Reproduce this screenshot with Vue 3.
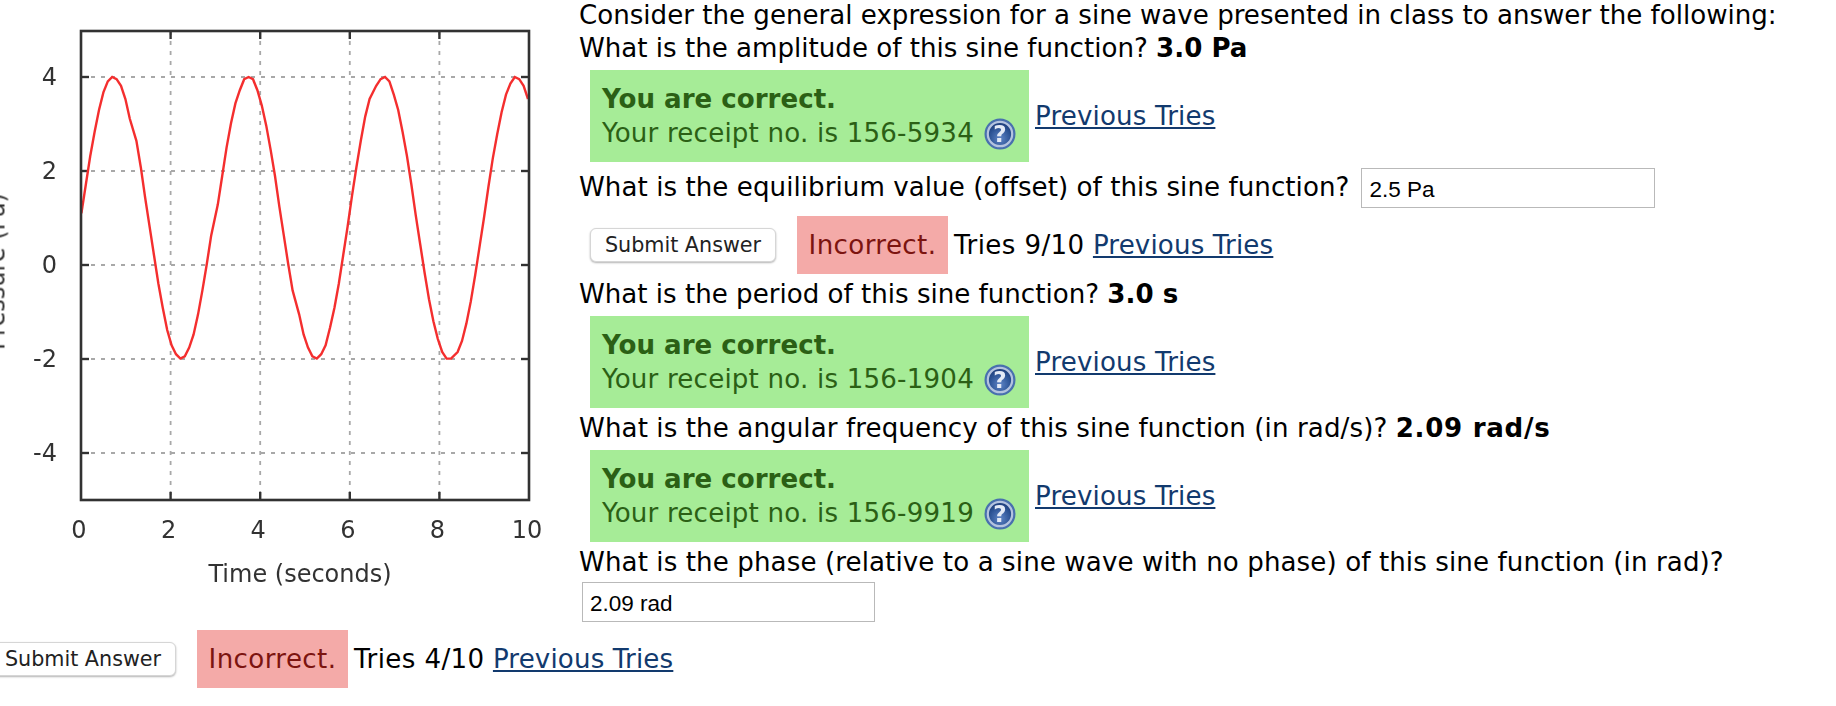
<script setup>
import { computed } from 'vue'

const xTicks = [0, 2, 4, 6, 8, 10]
const yTicks = [4, 2, 0, -2, -4]

const sx = (t) => 81 + t * 44.8
const sy = (v) => 265 - v * 47

// gnuplot default of 100 samples, snapped to the coarse pixels of the png
const curve = computed(() => {
  const pts = []
  for (let i = 0; i < 100; i++) {
    const t = (i / 99) * 10
    const v = 3 * Math.sin(2.0944 * t + 0.03) + 1
    const x = Math.round(sx(t) / 2.2) * 2.2
    const y = Math.round(sy(v) / 2.2) * 2.2
    pts.push(`${x.toFixed(1)},${y.toFixed(1)}`)
  }
  return pts.join(' ')
})
</script>

<template>
  <div class="page">
    <div class="top">
      <svg class="plot" width="579" height="630" viewBox="0 0 579 630">
        <defs>
          <filter id="soft" x="-5%" y="-5%" width="110%" height="110%">
            <feGaussianBlur stdDeviation="0.55" />
          </filter>
        </defs>
        <g filter="url(#soft)">
          <g class="grid">
            <line v-for="t in xTicks.slice(1, 5)" :key="t" :x1="sx(t)" :x2="sx(t)" y1="31" y2="500" />
            <line v-for="v in yTicks" :key="v" x1="81" x2="529" :y1="sy(v)" :y2="sy(v)" />
          </g>
          <g class="ticks">
            <template v-for="t in xTicks.slice(1, 5)" :key="t">
              <line :x1="sx(t)" :x2="sx(t)" y1="31" y2="39" />
              <line :x1="sx(t)" :x2="sx(t)" y1="492" y2="500" />
            </template>
            <template v-for="v in yTicks" :key="v">
              <line x1="81" x2="89" :y1="sy(v)" :y2="sy(v)" />
              <line x1="521" x2="529" :y1="sy(v)" :y2="sy(v)" />
            </template>
          </g>
          <polyline class="wave" :points="curve" />
          <rect class="frame" x="81" y="31" width="448" height="469" />
          <text v-for="v in yTicks" :key="v" class="label" x="57" :y="sy(v) + 8" text-anchor="end">{{ v }}</text>
          <text v-for="t in xTicks" :key="t" class="label" :x="sx(t) - 2" y="538" text-anchor="middle">{{ t }}</text>
          <text class="label" x="300" y="582" text-anchor="middle">Time (seconds)</text>
          <text class="label" transform="translate(4.5 271.5) rotate(-90)" text-anchor="middle">Pressure (Pa)</text>
        </g>
      </svg>

      <div class="questions">
        <div class="line">Consider the general expression for a sine wave presented in class to answer the following:</div>
        <div class="line">What is the amplitude of this sine function? <b>3.0 Pa</b></div>

        <div class="result">
          <div class="correct">
            <div><b>You are correct.</b></div>
            <div class="receipt">Your receipt no. is 156-5934
              <svg class="help" width="32" height="32" viewBox="0 0 32 32">
                <defs>
                  <radialGradient id="helpFill" cx="50%" cy="68%" r="62%">
                    <stop offset="0%" stop-color="#5f84c6" />
                    <stop offset="65%" stop-color="#2f5698" />
                    <stop offset="100%" stop-color="#203f7d" />
                  </radialGradient>
                  <filter id="helpSoft" x="-10%" y="-10%" width="120%" height="120%">
                    <feGaussianBlur stdDeviation="0.5" />
                  </filter>
                </defs>
                <g filter="url(#helpSoft)">
                  <circle cx="16" cy="16" r="15.5" fill="#486fae" />
                  <circle cx="16" cy="16" r="12.2" fill="url(#helpFill)" stroke="#b4c3df" stroke-width="2.2" />
                  <text x="16" y="24" text-anchor="middle" class="help-mark">?</text>
                </g>
              </svg>
            </div>
          </div>
          <a class="tries-link" href="#">Previous Tries</a>
        </div>

        <div class="line answer-row">
          <span class="loose-sm">What is the equilibrium value (offset) of this sine function?</span>
          <input class="answer wide" value="2.5 Pa" />
        </div>

        <div class="submit-row">
          <button class="submit">Submit Answer</button>
          <span class="incorrect">Incorrect.</span>
          <span class="tries"><span class="count">Tries 9/10</span> <a class="tries-link" href="#">Previous Tries</a></span>
        </div>

        <div class="line gap">What is the period of this sine function? <b>3.0 s</b></div>

        <div class="result">
          <div class="correct">
            <div><b>You are correct.</b></div>
            <div class="receipt">Your receipt no. is 156-1904
              <svg class="help" width="32" height="32" viewBox="0 0 32 32">
                <g filter="url(#helpSoft)">
                  <circle cx="16" cy="16" r="15.5" fill="#486fae" />
                  <circle cx="16" cy="16" r="12.2" fill="url(#helpFill)" stroke="#b4c3df" stroke-width="2.2" />
                  <text x="16" y="24" text-anchor="middle" class="help-mark">?</text>
                </g>
              </svg>
            </div>
          </div>
          <a class="tries-link" href="#">Previous Tries</a>
        </div>

        <div class="line gap"><span class="loose">What is the angular frequency of this sine function (in rad/s)?</span> <b class="bold-rate">2.09 rad/s</b></div>

        <div class="result">
          <div class="correct">
            <div><b>You are correct.</b></div>
            <div class="receipt">Your receipt no. is 156-9919
              <svg class="help" width="32" height="32" viewBox="0 0 32 32">
                <g filter="url(#helpSoft)">
                  <circle cx="16" cy="16" r="15.5" fill="#486fae" />
                  <circle cx="16" cy="16" r="12.2" fill="url(#helpFill)" stroke="#b4c3df" stroke-width="2.2" />
                  <text x="16" y="24" text-anchor="middle" class="help-mark">?</text>
                </g>
              </svg>
            </div>
          </div>
          <a class="tries-link" href="#">Previous Tries</a>
        </div>

        <div class="line gap loose">What is the phase (relative to a sine wave with no phase) of this sine function (in rad)?</div>
        <input class="answer narrow" value="2.09 rad" />
      </div>
    </div>

    <div class="submit-row bottom">
      <button class="submit">Submit Answer</button>
      <span class="incorrect">Incorrect.</span>
      <span class="tries"><span class="count">Tries 4/10</span> <a class="tries-link" href="#">Previous Tries</a></span>
    </div>
  </div>
</template>

<style>
html, body {
  background: #fff;
  overflow: hidden;
}
</style>

<style scoped>
.page {
  width: 1836px;
  height: 706px;
  overflow: hidden;
  font-family: "DejaVu Sans", Verdana, sans-serif;
  font-size: 26.1px;
  color: #000;
}

.top {
  display: flex;
  height: 630px;
}

.plot {
  flex: none;
  display: block;
}

.grid line {
  stroke: #a8a8a8;
  stroke-width: 1.8;
  stroke-dasharray: 4 6;
}

.ticks line {
  stroke: #333;
  stroke-width: 2.4;
}

.wave {
  fill: none;
  stroke: #f42f2f;
  stroke-width: 2.4;
}

.frame {
  fill: none;
  stroke: #333;
  stroke-width: 2.6;
}

.label {
  font-family: "DejaVu Sans", sans-serif;
  font-size: 24px;
  fill: #333;
}

.questions {
  flex: none;
  width: 1240px;
  margin-top: -1px;
}

.line {
  line-height: 33px;
  white-space: nowrap;
}

.gap {
  margin-top: 4px;
}

.loose {
  letter-spacing: 0.1px;
}

.loose-sm {
  letter-spacing: 0.06px;
}

.bold-rate {
  letter-spacing: 0.7px;
}

.count {
  letter-spacing: 0.4px;
}

.result {
  display: flex;
  align-items: center;
  gap: 6px;
  margin: 5px 0 0 11px;
  height: 92px;
}

.correct {
  width: 439px;
  box-sizing: border-box;
  height: 92px;
  padding: 12px;
  background: #a6ec97;
  color: #2b6015;
  line-height: 34px;
  white-space: nowrap;
}

.receipt {
  display: flex;
  align-items: center;
  gap: 10px;
  letter-spacing: 0.2px;
}

.help {
  flex: none;
  margin-top: 2px;
}

.help-mark {
  font-family: "DejaVu Sans", sans-serif;
  font-size: 23px;
  font-weight: 700;
  fill: #e4eaf6;
}

.tries-link {
  color: #123a6e;
  text-decoration: underline;
  letter-spacing: 0.15px;
}

.answer-row {
  display: flex;
  align-items: center;
  gap: 12px;
  height: 41px;
  margin-top: 5px;
}

.answer {
  box-sizing: border-box;
  display: block;
  height: 40px;
  padding: 4px 7px 0;
  border: 1px solid #b9b9b9;
  border-radius: 0;
  outline: none;
  background: #fff;
  color: #000;
  font-family: "Liberation Sans", Arial, sans-serif;
  font-size: 22.5px;
}

.wide {
  width: 294px;
}

.narrow {
  width: 293px;
  margin: 3px 0 0 3px;
}

.submit-row {
  display: flex;
  align-items: center;
  height: 58px;
  margin: 8px 0 0 11px;
}

.bottom {
  margin: 0 0 0 -10px;
}

.submit {
  box-sizing: border-box;
  width: 186px;
  height: 34px;
  padding: 0;
  border: 1px solid #d6d6d6;
  border-radius: 6px;
  background: #fff;
  box-shadow: 0 1px 2px rgba(0, 0, 0, 0.3);
  color: #222;
  font-family: "DejaVu Sans", Verdana, sans-serif;
  font-size: 20.7px;
}

.incorrect {
  box-sizing: border-box;
  width: 151px;
  height: 58px;
  margin-left: 21px;
  background: #f4aaa8;
  color: #7c1410;
  line-height: 58px;
  text-align: center;
  letter-spacing: 0.4px;
}

.tries {
  margin-left: 6px;
  white-space: nowrap;
}
</style>
